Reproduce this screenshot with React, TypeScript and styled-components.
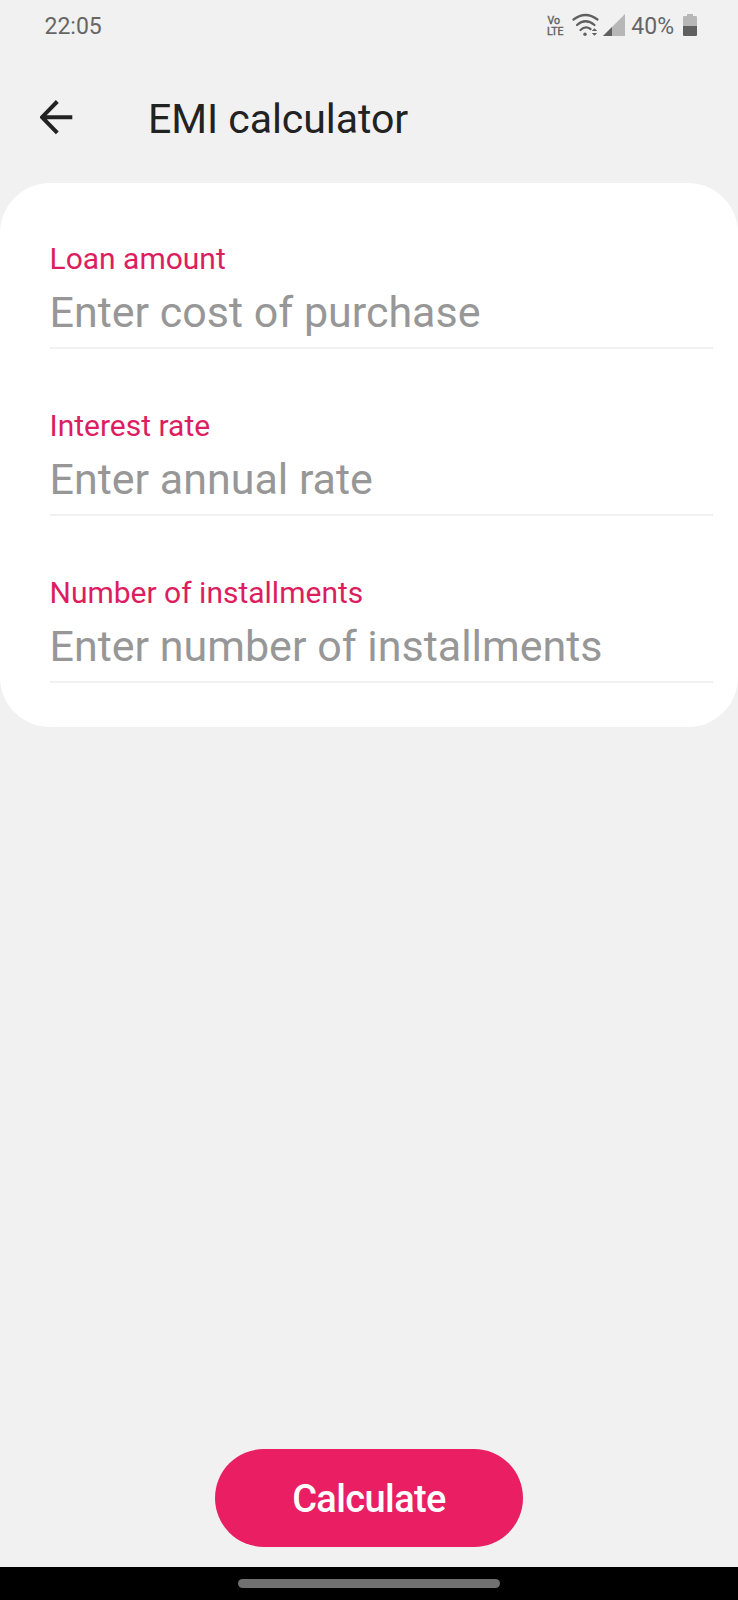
import React from 'react';
import styled, { createGlobalStyle } from 'styled-components';

const GlobalStyle = createGlobalStyle`
  *, *::before, *::after { box-sizing: border-box; }
  body {
    margin: 0;
    background: #f1f1f1;
    font-family: Roboto, "Liberation Sans", sans-serif;
  }
`;

const Screen = styled.div`
  display: flex;
  flex-direction: column;
  width: 738px;
  height: 1600px;
  background: #f1f1f1;
  overflow: hidden;
`;

const StatusBar = styled.header`
  display: flex;
  justify-content: space-between;
  height: 52px;
  padding: 0 40px 0 44.5px;
  color: #666;
  font-size: 23px;
  line-height: 54px;
`;

const StatusIcons = styled.div`
  display: flex;
`;

const StatusGlyphs = styled.svg`
  display: block;
  width: 80px;
  height: 52px;
  margin-right: 5px;
`;

const NetworkLabel = styled.text`
  font: 400 11px Roboto, sans-serif;
  fill: #606060;
  stroke: #606060;
  stroke-width: 0.4;
`;

const BatteryGlyph = styled.svg`
  display: block;
  width: 16px;
  height: 52px;
  margin-left: 8px;
`;

const AppBar = styled.div`
  display: flex;
  align-items: center;
  height: 131px;
  padding: 0 40px;
`;

const BackButton = styled.button`
  display: flex;
  width: 108px;
  height: 48px;
  padding: 0;
  border: 0;
  background: none;
`;

const Title = styled.h1`
  margin: 3px 0 0;
  color: #222;
  font-size: 41px;
  font-weight: 400;
  line-height: 48px;
  letter-spacing: -0.05px;
`;

const Form = styled.main`
  height: 544px;
  padding: 0 25px 0 50px;
  border-radius: 50px;
  background: #fff;
`;

const Field = styled.div`
  display: flex;
  flex-direction: column;
  justify-content: flex-end;
  height: 167px;
  border-bottom: 2px solid #f1f1f1;

  &:first-child {
    height: 166px;
  }
`;

const Label = styled.label`
  height: 36px;
  margin-left: -0.5px;
  color: #dc1e60;
  font-size: 30px;
  line-height: 36px;
`;

const Placeholder = styled.div`
  height: 54px;
  margin: 8px 0 8px -0.5px;
  color: #979797;
  font-size: 43px;
  line-height: 54px;
`;

const Footer = styled.footer`
  display: flex;
  justify-content: center;
  margin-top: auto;
  padding-bottom: 20px;
`;

const CalculateButton = styled.button`
  width: 308px;
  height: 98px;
  padding: 2px 0 0;
  border: 0;
  border-radius: 49px;
  background: #e91e63;
  color: #fff;
  font-family: inherit;
  font-size: 38px;
  font-weight: 500;
  line-height: 48px;
  letter-spacing: -0.6px;
`;

const NavigationBar = styled.nav`
  display: flex;
  justify-content: center;
  height: 33px;
  padding-top: 12px;
  background: #000;
`;

const HomeHandle = styled.div`
  width: 262px;
  height: 9px;
  border-radius: 5px;
  background: #707070;
`;

const fields = [
  { label: 'Loan amount', placeholder: 'Enter cost of purchase' },
  { label: 'Interest rate', placeholder: 'Enter annual rate' },
  { label: 'Number of installments', placeholder: 'Enter number of installments' },
];

export default function App() {
  return (
    <>
      <GlobalStyle />
      <Screen>
        <StatusBar>
          <span>22:05</span>
          <StatusIcons>
            <StatusGlyphs viewBox="546 0 80 52">
              <NetworkLabel x="547.5" y="24" textLength="12.5" lengthAdjust="spacingAndGlyphs">Vo</NetworkLabel>
              <NetworkLabel x="547" y="35" textLength="16.5" lengthAdjust="spacingAndGlyphs">LTE</NetworkLabel>
              <g fill="none" stroke="#606060" strokeWidth="2.2" strokeLinecap="round">
                <path d="M573.5 19.5Q585.5 10.5 597.5 19.5" />
                <path d="M577 25Q585.5 17.5 594.5 25" />
                <path d="M580.5 30Q585.5 25.5 590.5 29" />
              </g>
              <circle cx="585" cy="34.2" r="1.7" fill="#606060" />
              <path d="M591.8 31L594.5 28.2L597.2 31ZM591.8 33L594.5 35.8L597.2 33Z" fill="#606060" />
              <path d="M603 36L625 14V36Z" fill="#b7b7b7" />
              <path d="M603 36L612 27V36Z" fill="#606060" />
            </StatusGlyphs>
            <span>40%</span>
            <BatteryGlyph viewBox="682 0 16 52">
              <path d="M687 14H693V16H696Q697 16 697 17V26H683V17Q683 16 684 16H687Z" fill="#b7b7b7" />
              <path d="M683 26H697V35Q697 36 696 36H684Q683 36 683 35Z" fill="#606060" />
            </BatteryGlyph>
          </StatusIcons>
        </StatusBar>
        <AppBar>
          <BackButton aria-label="Back">
            <svg width="34" height="48" viewBox="0 0 34 48">
              <path d="M32.3 23.2H3M17.3 7.5L2 23.2L17.3 38.8" fill="none" stroke="#222" strokeWidth="4" />
            </svg>
          </BackButton>
          <Title>EMI calculator</Title>
        </AppBar>
        <Form>
          {fields.map(({ label, placeholder }) => (
            <Field key={label}>
              <Label>{label}</Label>
              <Placeholder>{placeholder}</Placeholder>
            </Field>
          ))}
        </Form>
        <Footer>
          <CalculateButton>Calculate</CalculateButton>
        </Footer>
        <NavigationBar>
          <HomeHandle />
        </NavigationBar>
      </Screen>
    </>
  );
}
